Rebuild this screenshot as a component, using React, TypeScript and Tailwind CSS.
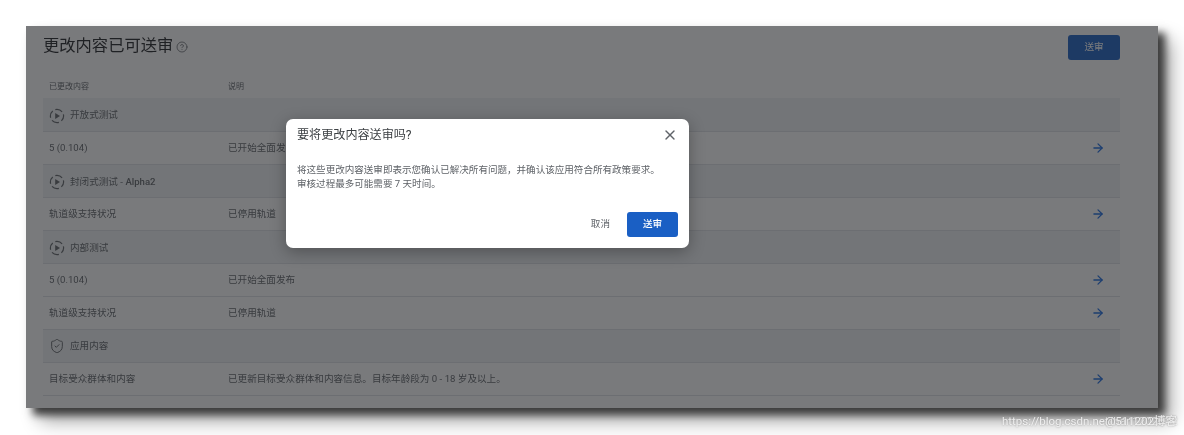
import { ArrowRight, CircleHelp, ShieldCheck, X } from "lucide-react";

const font = "font-['Roboto','Noto_Sans_CJK_SC',sans-serif]";

const PlayTrack = () => (
  <svg width="16" height="16" viewBox="0 0 16 16" fill="none" className="shrink-0">
    <circle cx="8" cy="8" r="6.6" stroke="#5f6368" strokeWidth="1.2" strokeDasharray="7.5 2.9" strokeDashoffset="2" />
    <path d="M6.2 4.9 L11 8 L6.2 11.1 Z" fill="#5f6368" />
  </svg>
);

const Section = ({ title, icon, bold, tall }: { title: string, icon: "play" | "shield", bold?: string, tall?: boolean }) => (
  <div className={`flex items-center gap-[5px] pl-[6px] bg-[#f1f3f4] border-b border-[#dfe1e5] ${tall ? "h-[34px]" : "h-[33px]"} ${icon === "play" ? "pt-[2px]" : ""}`}>
    {icon === "play" ? <PlayTrack /> : <ShieldCheck size={16} color="#5f6368" strokeWidth={1.5} className="shrink-0" />}
    <span className="text-[9.6px] text-[#5f6368]">
      {title}
      {bold && <span className="font-medium"> {bold}</span>}
    </span>
  </div>
);

const Row = ({ name, detail }: { name: string, detail: string }) => (
  <div className="flex items-center h-[33px] pl-[6px] pr-[15px] border-b border-[#dfe1e5] text-[9.6px] text-[#5f6368]">
    <div className="w-[179px] shrink-0">{name}</div>
    <div className="flex-1">{detail}</div>
    <ArrowRight size={14} color="#1a6ae0" strokeWidth={2.2} />
  </div>
);

export default function App() {
  return (
    <div className={`w-[1184px] h-[435px] bg-white overflow-hidden pt-[26px] pl-[26px] blur-[0.6px] relative ${font}`}>
      <div className="relative w-[1132px] h-[382px] bg-white pl-[17px] pr-[38px] shadow-[7px_7px_8px_#3c3c3c,14px_14px_18px_#b0b0b0]">
        <div className="flex items-start justify-between h-[50px]">
          <div className="flex items-center gap-[3px] pt-[8px]">
            <h1 className="text-[16.3px] leading-6 font-normal text-[#202124]">更改内容已可送审</h1>
            <CircleHelp size={12} color="#5f6368" strokeWidth={1.6} className="mt-[1px]" />
          </div>
          <button className="mt-[9px] w-[52px] h-[25px] rounded-[3px] bg-[#1a5fc4] text-[9.6px] text-white">送审</button>
        </div>
        <div className="flex items-center h-[22px] pl-[6px] text-[8px] text-[#5f6368]">
          <div className="w-[179px]">已更改内容</div>
          <div>说明</div>
        </div>
        <Section title="开放式测试" icon="play" tall />
        <Row name="5 (0.104)" detail="已开始全面发布" />
        <Section title="封闭式测试 -" bold="Alpha2" icon="play" />
        <Row name="轨道级支持状况" detail="已停用轨道" />
        <Section title="内部测试" icon="play" />
        <Row name="5 (0.104)" detail="已开始全面发布" />
        <Row name="轨道级支持状况" detail="已停用轨道" />
        <Section title="应用内容" icon="shield" />
        <Row name="目标受众群体和内容" detail="已更新目标受众群体和内容信息。目标年龄段为 0 - 18 岁及以上。" />

        {/* dimmed backdrop + dialog */}
        <div className="absolute inset-0 bg-[#202124]/60" />
        <div className="absolute left-[260px] top-[93px] w-[403px] h-[129px] rounded-[7px] bg-white px-[11px] shadow-[0_4px_16px_rgba(0,0,0,0.3)] flex flex-col">
          <div className="flex items-center justify-between h-[32px]">
            <h2 className="text-[12.1px] font-normal text-[#3c4043]">要将更改内容送审吗?</h2>
            <X size={16} color="#5f6368" strokeWidth={2} />
          </div>
          <p className="mt-[12px] text-[9.55px] leading-[13.5px] text-[#5f6368]">
            将这些更改内容送审即表示您确认已解决所有问题，并确认该应用符合所有政策要求。
            <br />
            审核过程最多可能需要 7 天时间。
          </p>
          <div className="flex items-center justify-end gap-[17px] mt-[22px]">
            <button className="text-[9.6px] text-[#5f6368]">取消</button>
            <button className="w-[51px] h-[25px] rounded-[3px] bg-[#1a5fc4] text-[9.6px] font-medium text-white">送审</button>
          </div>
        </div>
      </div>

      {/* csdn watermark, two stamps on top of each other */}
      <span className="absolute left-[1002px] top-[413px] text-[11.5px] text-white/80 [text-shadow:0_0_2px_#8a8a8a]">https://blog.csdn.net/han1202012</span>
      <span className="absolute right-[7px] top-[413px] text-[11.5px] text-white/80 [text-shadow:0_0_2px_#8a8a8a]">@511202博客</span>
    </div>
  );
}
